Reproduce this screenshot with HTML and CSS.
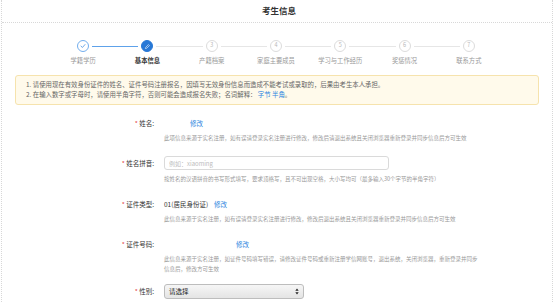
FILE: index.html
```html
<!DOCTYPE html>
<html lang="zh-CN">
<head>
<meta charset="utf-8">
<title>考生信息</title>
<link rel="stylesheet" href="styles.css">
</head>
<body>
<div class="page">
  <header class="header"><h1 class="title">考生信息</h1></header>

  <ol class="steps">
    <li class="step done">
      <div class="track"><span class="line blank"></span><span class="dot"><svg viewBox="0 0 12 12" width="8" height="8"><path d="M3 6.2 L5.2 8.2 L9 3.8" fill="none" stroke="#4a94e4" stroke-width="1.2" stroke-linecap="round" stroke-linejoin="round"/></svg></span><span class="line blue"></span></div>
      <span class="step-label">学籍学历</span>
    </li>
    <li class="step current">
      <div class="track"><span class="line blue"></span><span class="dot"><svg viewBox="0 0 12 12" width="7" height="7"><path d="M2.5 9.5 L3 7.3 L7.6 2.7 L9.3 4.4 L4.7 9 Z" fill="none" stroke="#fff" stroke-width="1"/></svg></span><span class="line"></span></div>
      <span class="step-label">基本信息</span>
    </li>
    <li class="step">
      <div class="track"><span class="line"></span><span class="dot">3</span><span class="line"></span></div>
      <span class="step-label">产籍档案</span>
    </li>
    <li class="step">
      <div class="track"><span class="line"></span><span class="dot">4</span><span class="line"></span></div>
      <span class="step-label">家庭主要成员</span>
    </li>
    <li class="step">
      <div class="track"><span class="line"></span><span class="dot">5</span><span class="line"></span></div>
      <span class="step-label">学习与工作经历</span>
    </li>
    <li class="step">
      <div class="track"><span class="line"></span><span class="dot">6</span><span class="line"></span></div>
      <span class="step-label">奖惩情况</span>
    </li>
    <li class="step">
      <div class="track"><span class="line"></span><span class="dot">7</span><span class="line blank"></span></div>
      <span class="step-label">联系方式</span>
    </li>
  </ol>

  <div class="notice">
    <p>1. 请使用现在有效身份证件的姓名、证件号码注册报名，因填写无效身份信息而造成不能考试或录取的，后果由考生本人承担。</p>
    <p>2. 在输入数字或字母时，请使用半角字符，否则可能会造成报名失败；名词解释：&nbsp;<a class="link" href="#">字节</a> <a class="link" href="#">半角</a>。</p>
  </div>

  <form class="form">
    <div class="row">
      <label class="label"><span class="req">*</span> 姓名:</label>
      <div class="field">
        <div class="value"><span class="masked name-mask"></span><a class="link" href="#">修改</a></div>
        <p class="help">此项信息来源于实名注册，如有误请登录实名注册进行修改，修改后请退出系统且关闭浏览器重新登录并同步信息后方可生效</p>
      </div>
    </div>

    <div class="row">
      <label class="label"><span class="req">*</span> 姓名拼音:</label>
      <div class="field">
        <div class="value"><input class="input" type="text" placeholder="例如：xiaoming"></div>
        <p class="help help-input">按姓名的汉语拼音的书写形式填写，要求顶格写，且不可出现空格，大小写均可（最多输入30个字节的半角字符）</p>
      </div>
    </div>

    <div class="row">
      <label class="label"><span class="req">*</span> 证件类型:</label>
      <div class="field">
        <div class="value"><span class="text">01(居民身份证)</span><a class="link" href="#">修改</a></div>
        <p class="help">此信息来源于实名注册，如有误请登录实名注册进行修改，修改后退出系统且关闭浏览器重新登录并同步信息后方可生效</p>
      </div>
    </div>

    <div class="row row-tight">
      <label class="label"><span class="req">*</span> 证件号码:</label>
      <div class="field">
        <div class="value"><span class="masked id-mask"></span><a class="link" href="#">修改</a></div>
        <p class="help help-narrow">此信息来源于实名注册，如证件号码填写错误，请修改证件号码或重新注册学信网账号，退出系统，关闭浏览器，重新登录并同步信息后，修改方可生效</p>
      </div>
    </div>

    <div class="row">
      <label class="label"><span class="req">*</span> 性别:</label>
      <div class="field">
        <div class="value">
          <div class="select"><span>请选择</span><svg class="arrows" viewBox="0 0 6 10" width="4" height="7"><path d="M3 0.5 L5.5 4 L0.5 4 Z" fill="#222"/><path d="M3 9.5 L5.5 6 L0.5 6 Z" fill="#222"/></svg></div>
        </div>
      </div>
    </div>
  </form>
</div>
</body>
</html>
```

FILE: styles.css
```css
* { box-sizing: border-box; }

html, body {
  margin: 0;
  padding: 0;
  background: #fff;
}

body {
  font-family: "Noto Sans CJK SC", "Noto Sans", "Liberation Sans", sans-serif;
  color: #333;
}

.page {
  min-height: 302px;
  border-left: 1px dotted #d8d8d8;
  border-right: 1px dotted #d8d8d8;
  margin: 0 1px;
}

.header {
  height: 23px;
  border-bottom: 1px dotted #d8d8d8;
  display: flex;
  align-items: center;
  justify-content: center;
}

.title {
  margin: 0;
  font-size: 8.5px;
  line-height: 12px;
  font-weight: 600;
  color: #333;
  padding-left: 4px;
  padding-bottom: 2px;
}

.steps {
  list-style: none;
  margin: 17px 0 0 49px;
  padding: 0;
  width: 450px;
  display: flex;
}

.step {
  flex: 1;
  display: flex;
  flex-direction: column;
  align-items: center;
}

.track {
  width: 100%;
  display: flex;
  align-items: center;
  height: 12px;
}

.line {
  flex: 1;
  height: 1px;
  background: #e6e6e6;
}

.line:first-child { margin-right: 3px; }
.line:last-child { margin-left: 3px; }

.line.blue { background: #5ea2ea; }
.line.blank { background: transparent; }

.dot {
  width: 12px;
  height: 12px;
  border-radius: 50%;
  border: 1px solid #dcdcdc;
  display: flex;
  align-items: center;
  justify-content: center;
  font-size: 5.5px;
  line-height: 1;
  color: #b8b8b8;
  flex: none;
}

.step.done .dot { border-color: #72aeee; }
.step.current .dot { background: #2878d6; border-color: #2878d6; }

.step-label {
  margin-top: 4px;
  font-size: 6.3px;
  line-height: 10px;
  color: #999;
  white-space: nowrap;
}

.step.current .step-label { color: #333; font-weight: 600; }

.notice {
  margin: 9px 13px 0 13px;
  background: #fffaeb;
  border: 1px solid #f6e3ad;
  border-radius: 3px;
  padding: 4px 10px;
}

.notice p {
  margin: 0;
  font-size: 6.4px;
  line-height: 10px;
  color: #666;
  white-space: nowrap;
}

.link {
  color: #2d86e0;
  text-decoration: none;
}

.form {
  margin-top: 11px;
}

.row {
  display: grid;
  grid-template-columns: 152px 1fr;
  column-gap: 10px;
  margin-bottom: 13px;
}

.row-tight { margin-bottom: 10px; }

.label {
  text-align: right;
  font-size: 6.5px;
  line-height: 14px;
  height: 14px;
  color: #333;
  white-space: nowrap;
}

.req {
  color: #e23a3a;
}

.field {
  min-width: 0;
}

.value {
  height: 14px;
  display: flex;
  align-items: center;
  font-size: 6.5px;
  color: #333;
}

.masked { display: inline-block; height: 1px; }
.name-mask { width: 26px; }
.id-mask { width: 72px; }

.text { margin-right: 6px; }

.help {
  margin: 3px 0 0;
  max-width: 332px;
  font-size: 5.5px;
  line-height: 10px;
  color: #999;
}

.help-narrow { max-width: 318px; }

.help-input { margin-top: 4px; }

.input {
  width: 225px;
  height: 14px;
  border: 1px solid #dadada;
  border-radius: 3px;
  padding: 0 4px;
  font-family: inherit;
  font-size: 6px;
  color: #333;
  outline: none;
}

.input::placeholder { color: #bdbdbd; }

.select {
  width: 140px;
  height: 15px;
  border: 1px solid #bdbdbd;
  border-radius: 3px;
  background: linear-gradient(#f6f6f6, #e4e4e4);
  display: flex;
  align-items: center;
  justify-content: space-between;
  padding: 0 4px 0 4px;
  font-size: 6.5px;
  color: #222;
}

.arrows { flex: none; }
```
